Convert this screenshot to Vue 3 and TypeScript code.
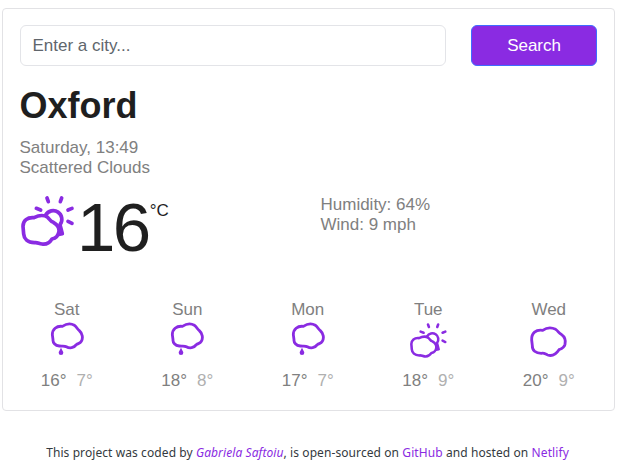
<script setup lang="ts">
type Icon = 'rain' | 'partly' | 'cloud'

interface ForecastDay {
  name: string
  icon: Icon
  high: number
  low: number
}

const forecast: ForecastDay[] = [
  { name: 'Sat', icon: 'rain', high: 16, low: 7 },
  { name: 'Sun', icon: 'rain', high: 18, low: 8 },
  { name: 'Mon', icon: 'rain', high: 17, low: 7 },
  { name: 'Tue', icon: 'partly', high: 18, low: 9 },
  { name: 'Wed', icon: 'cloud', high: 20, low: 9 },
]
</script>

<template>
  <div class="page">
    <main class="card">
      <form class="search" @submit.prevent>
        <input class="field" type="text" placeholder="Enter a city..." />
        <button class="submit" type="submit">Search</button>
      </form>
      <h1 class="city">Oxford</h1>
      <div class="summary">
        <div>Saturday, 13:49</div>
        <div>Scattered Clouds</div>
      </div>
      <section class="current">
        <div class="reading">
          <svg class="icon-now" viewBox="30 28 165 156">
            <path d="M107 88A26 26 0 1 1 150 117L157 144L146 146" />
            <path class="body" d="M39 122C39 105 52 94 72 96C84 90 100 86 113 95C119 100 120 107 130 110C142 117 148 125 147 137C145 151 137 158 126 160C119 171 108 177 96 175C86 174 83 169 73 171C53 171 42 159 41 145Z" />
            <path d="M111 37L115 48M155 37L151 48M79 68L92 73M174 73L186 68M174 107L186 113" />
            <path class="drop" d="M146 124L161 146L142 148Z" />
          </svg>
          <span class="degrees">16</span>
          <span class="unit">°C</span>
        </div>
        <div class="details">
          <div>Humidity: 64%</div>
          <div>Wind: 9 mph</div>
        </div>
      </section>
      <section class="forecast">
        <div v-for="day in forecast" :key="day.name" class="day">
          <div class="name">{{ day.name }}</div>
          <svg v-if="day.icon === 'partly'" class="icon-day" viewBox="-6.5 24 173 173">
            <g transform="translate(-31 2)">
              <path d="M107 88A26 26 0 1 1 150 117L157 144L146 146" />
              <path class="body" d="M39 122C39 105 52 94 72 96C84 90 100 86 113 95C119 100 120 107 130 110C142 117 148 125 147 137C145 151 137 158 126 160C119 171 108 177 96 175C86 174 83 169 73 171C53 171 42 159 41 145Z" />
              <path d="M111 37L115 48M155 37L151 48M79 68L92 73M174 73L186 68M174 107L186 113" />
              <path class="drop" d="M146 124L161 146L142 148Z" />
            </g>
          </svg>
          <svg v-else-if="day.icon === 'rain'" class="icon-day thin" viewBox="6 9 120 120">
            <path d="M22 50C22 34 34 23 52 25C63 18 78 16 88 22C95 26 95 32 103 38C112 46 115 60 109 70C105 77 100 76 94 80C87 90 74 92 64 86C59 83 52 85 43 84C30 83 23 73 24 65Z" />
            <path class="drop" d="M48 89C45 96 41 100 41 104A7 7 0 0 0 55 104C55 100 51 96 48 89Z" />
          </svg>
          <svg v-else class="icon-day thin" viewBox="30 17 120 120">
            <path d="M38 74C37 53 51 42 71 45C84 36 98 36 110 42C118 47 119 54 127 57C137 64 141 74 138 87C135 98 128 100 120 103C111 117 98 123 86 119C78 116 76 112 67 114C50 114 39 105 40 91Z" />
          </svg>
          <div class="range">
            <span>{{ day.high }}°</span>
            <span class="low">{{ day.low }}°</span>
          </div>
        </div>
      </section>
    </main>
    <footer class="credits">
      This project was coded by <a class="author">Gabriela Saftoiu</a>, is open-sourced on
      <a>GitHub</a> and hosted on <a>Netlify</a>
    </footer>
  </div>
</template>

<style>
body {
  background: #fff;
}
</style>

<style scoped>
.page {
  height: 465px;
  padding-top: 8px;
  box-sizing: border-box;
  overflow: hidden;
  font-family: "Liberation Sans", Arial, sans-serif;
  font-size: 17px;
  line-height: 20px;
  color: #808080;
}
.card {
  box-sizing: border-box;
  width: 613px;
  height: 403px;
  margin-left: 2px;
  padding: 16px 17px 0 16.5px;
  border: 1px solid #e2e2e5;
  border-radius: 4px;
}
.search {
  display: flex;
  gap: 25px;
}
.field,
.submit {
  box-sizing: border-box;
  height: 41px;
  margin: 0;
  border-radius: 6px;
  font: inherit;
}
.field {
  width: 427px;
  padding: 0 12px;
  border: 1px solid #e3e4e8;
  background: #fff;
}
.field::placeholder {
  color: #60666c;
  opacity: 1;
}
.submit {
  width: 126px;
  padding: 0;
  border: 1px solid #3f6cff;
  background: #8a2be2;
  color: #fff;
}
.city {
  margin: 17px 0 10px;
  font-size: 36px;
  line-height: 45px;
  color: #1f1f1f;
}
.current {
  display: flex;
  margin-top: 16px;
  height: 106px;
}
.reading {
  display: flex;
  align-items: flex-start;
  width: 301px;
}
.icon-now {
  width: 55px;
  height: 52px;
  margin: 1px 0 0 0.5px;
  flex: none;
}
svg {
  fill: none;
  stroke: #8a2be2;
  stroke-width: 11;
  stroke-linecap: round;
  stroke-linejoin: round;
}
.thin {
  stroke-width: 8.5;
}
.body {
  fill: #fff;
}
.drop {
  fill: #8a2be2;
  stroke: none;
}
.degrees {
  margin-left: 2px;
  font-size: 69px;
  line-height: 68px;
  letter-spacing: -2.5px;
  color: #1f1f1f;
}
.unit {
  margin: 7px 0 0 1px;
  color: #1f1f1f;
}
.details {
  line-height: 21px;
}
.details div:last-child {
  line-height: 20px;
}
.forecast {
  display: grid;
  grid-template-columns: repeat(5, 1fr);
  margin: 0 -12px -1px -13px;
}
.day {
  display: flex;
  flex-direction: column;
  align-items: center;
}
.icon-day {
  width: 40px;
  height: 40px;
  margin: 1px 0 10px;
}
.range {
  display: flex;
  gap: 10px;
}
.low {
  color: #b0b0b0;
}
.credits {
  width: 615px;
  margin-top: 33px;
  text-align: center;
  font-family: "Noto Sans", "Open Sans", sans-serif;
  font-size: 12px;
  line-height: 18px;
  letter-spacing: 0.085px;
  color: #343a40;
  white-space: nowrap;
}
.credits a {
  color: #8a2be2;
}
.author {
  font-style: italic;
}
</style>
